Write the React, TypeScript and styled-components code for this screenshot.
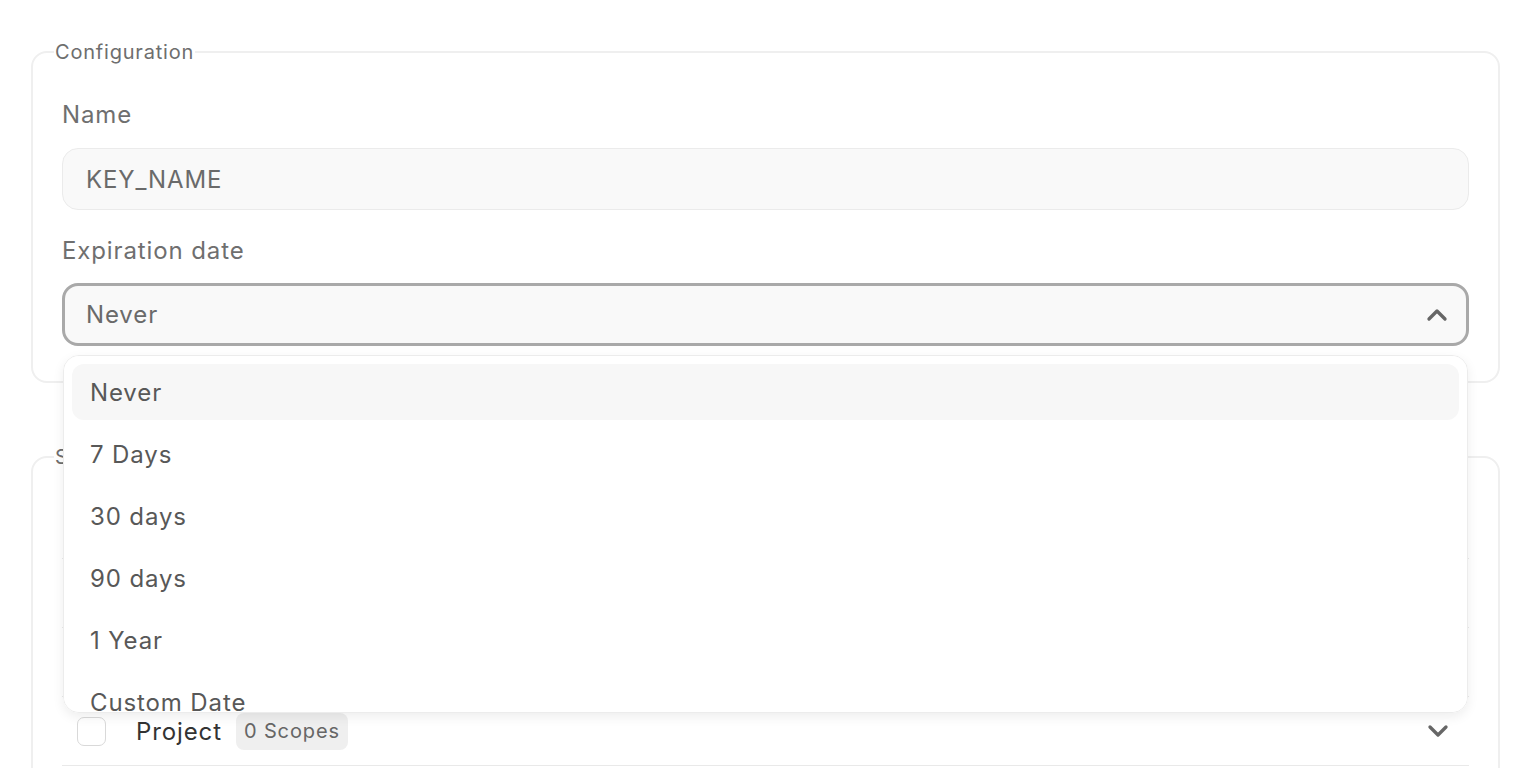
import {useState} from 'react';
import styled, {createGlobalStyle} from 'styled-components';
import {ChevronUp, ChevronDown} from 'lucide-react';

const GlobalStyle = createGlobalStyle`
  html, body {
    margin: 0;
    padding: 0;
    background: #fff;
    font-family: Inter, "Noto Sans", "Liberation Sans", sans-serif;
    letter-spacing: 0.055em;
  }
  * { box-sizing: border-box; }
  input, button { letter-spacing: inherit; }
`;

const expirationOptions = ['Never', '7 Days', '30 days', '90 days', '1 Year', 'Custom Date'];
const scopeGroups = ['Account', 'Organization', 'Team', 'Project'];

export default function App() {
  const [name, setName] = useState('KEY_NAME');
  const [expiration, setExpiration] = useState('Never');
  const [open, setOpen] = useState(true);

  return (
    <Page>
      <GlobalStyle />
      <Section>
        <Legend>Configuration</Legend>
        <Label>Name</Label>
        <Input value={name} onChange={e => setName(e.target.value)} />
        <Label $spaced>Expiration date</Label>
        <SelectWrap>
          <SelectButton $open={open} onClick={() => setOpen(!open)}>
            <span>{expiration}</span>
            {open ? <ChevronUp size={32} strokeWidth={2.5} /> : <ChevronDown size={32} strokeWidth={2.5} />}
          </SelectButton>
          {open && (
            <Menu>
              {expirationOptions.map(option => (
                <MenuItem
                  key={option}
                  $active={option === expiration}
                  onClick={() => { setExpiration(option); setOpen(false); }}
                >
                  {option}
                </MenuItem>
              ))}
            </Menu>
          )}
        </SelectWrap>
      </Section>

      <Section $gap>
        <Legend>Scopes</Legend>
        {scopeGroups.map(group => (
          <ScopeRow key={group}>
            <Checkbox />
            <ScopeName>{group}</ScopeName>
            <Badge>0 Scopes</Badge>
            <RowChevron><ChevronDown size={32} strokeWidth={2.5} /></RowChevron>
          </ScopeRow>
        ))}
      </Section>
    </Page>
  );
}

const Page = styled.div`
  padding: 40px 40px 40px 31px;
`;

const Section = styled.fieldset<{$gap?: boolean}>`
  margin: ${p => (p.$gap ? '62px' : '0')} 0 0 0;
  min-width: 0;
  border: 2px solid #efefef;
  border-radius: 16px;
  padding: 21px 29px 35px 29px;
  display: flex;
  flex-direction: column;
`;

const Legend = styled.legend`
  margin-left: -8px;
  padding: 0 1px;
  font-size: 20px;
  line-height: 24px;
  color: #6e6e6e;
  letter-spacing: 0.04em;
`;

const Label = styled.div<{$spaced?: boolean}>`
  font-size: 24px;
  line-height: 36px;
  color: #6f6f6f;
  margin: ${p => (p.$spaced ? '23px 0 14px' : '12px 0 15px')};
`;

const Input = styled.input`
  height: 62px;
  width: 100%;
  border: 1px solid #ebebeb;
  border-radius: 16px;
  background: #f9f9f9;
  padding: 0 23px;
  font-family: inherit;
  font-size: 24px;
  color: #6a6a6a;
  outline: none;
`;

const SelectWrap = styled.div`
  position: relative;
`;

const SelectButton = styled.button<{$open: boolean}>`
  height: 63px;
  width: 100%;
  display: flex;
  align-items: center;
  justify-content: space-between;
  border: ${p => (p.$open ? '3px solid #a9a9a9' : '1px solid #ebebeb')};
  border-radius: 16px;
  background: #f9f9f9;
  padding: 0 13px 0 21px;
  font-family: inherit;
  font-size: 24px;
  color: #6a6a6a;
  cursor: pointer;
  text-align: left;
  svg { color: #666; }
`;

const Menu = styled.div`
  position: absolute;
  top: 72px;
  left: 1px;
  right: 1px;
  height: 358px;
  overflow-y: auto;
  scrollbar-width: none;
  background: #fff;
  border: 1px solid #ececec;
  border-radius: 16px;
  box-shadow: 0 4px 12px rgba(0, 0, 0, 0.07);
  padding: 8px;
  display: flex;
  flex-direction: column;
  gap: 6px;
  z-index: 10;
`;

const MenuItem = styled.div<{$active: boolean}>`
  flex: 0 0 56px;
  display: flex;
  align-items: center;
  padding: 0 18px;
  border-radius: 12px;
  background: ${p => (p.$active ? '#f7f7f7' : 'transparent')};
  font-size: 24px;
  color: #585858;
  cursor: pointer;
`;

const ScopeRow = styled.div`
  height: 69px;
  display: flex;
  align-items: center;
  padding: 0 15px 0 15px;
  border-bottom: 1px solid #e9e9e9;
`;

const Checkbox = styled.span`
  width: 29px;
  height: 29px;
  border: 1.5px solid #d9d9d9;
  border-radius: 7px;
  background: #fff;
  margin-right: 30px;
`;

const ScopeName = styled.span`
  font-size: 24px;
  color: #333;
  margin-right: 14px;
`;

const Badge = styled.span`
  height: 37px;
  display: inline-flex;
  align-items: center;
  padding: 0 8px;
  border-radius: 8px;
  background: #efefef;
  font-size: 20px;
  color: #666;
`;

const RowChevron = styled.span`
  margin-left: auto;
  display: flex;
  color: #666;
`;
